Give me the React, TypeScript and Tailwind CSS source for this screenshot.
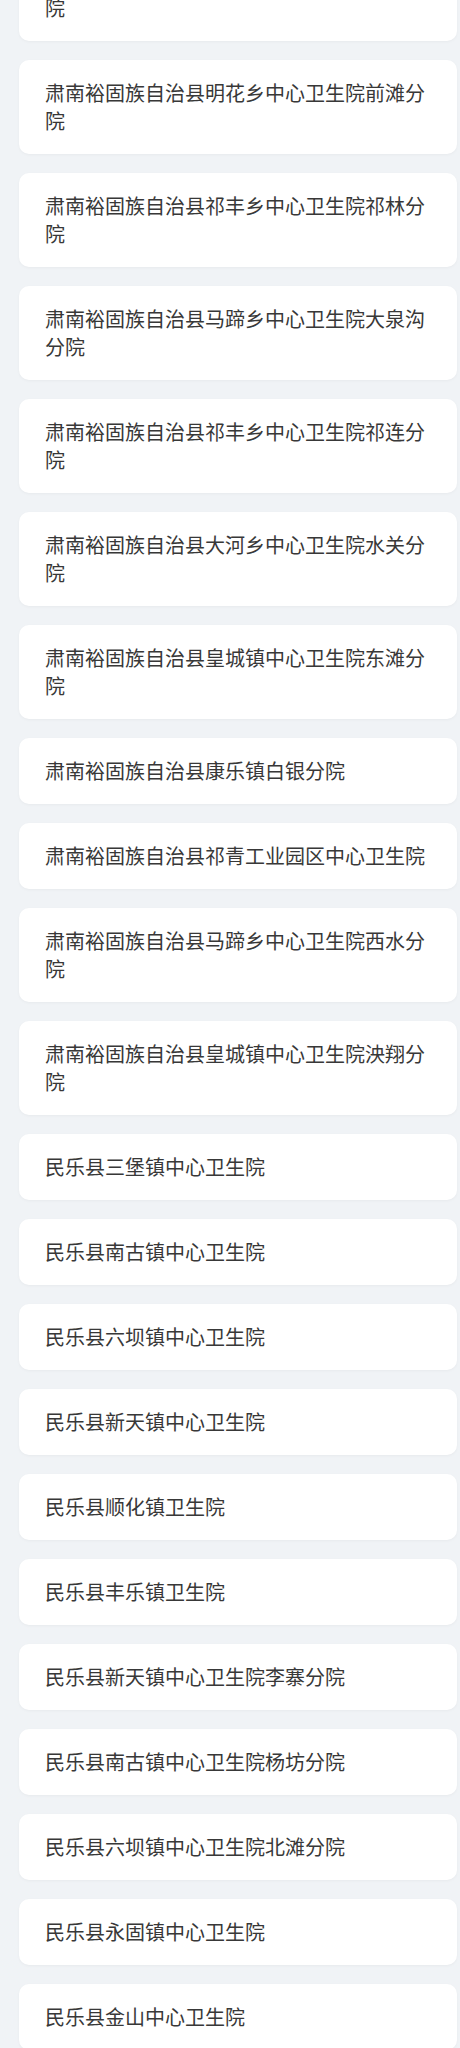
const HOSPITALS: string[] = [
  "肃南裕固族自治县明花乡中心卫生院莲花分院",
  "肃南裕固族自治县明花乡中心卫生院前滩分院",
  "肃南裕固族自治县祁丰乡中心卫生院祁林分院",
  "肃南裕固族自治县马蹄乡中心卫生院大泉沟分院",
  "肃南裕固族自治县祁丰乡中心卫生院祁连分院",
  "肃南裕固族自治县大河乡中心卫生院水关分院",
  "肃南裕固族自治县皇城镇中心卫生院东滩分院",
  "肃南裕固族自治县康乐镇白银分院",
  "肃南裕固族自治县祁青工业园区中心卫生院",
  "肃南裕固族自治县马蹄乡中心卫生院西水分院",
  "肃南裕固族自治县皇城镇中心卫生院泱翔分院",
  "民乐县三堡镇中心卫生院",
  "民乐县南古镇中心卫生院",
  "民乐县六坝镇中心卫生院",
  "民乐县新天镇中心卫生院",
  "民乐县顺化镇卫生院",
  "民乐县丰乐镇卫生院",
  "民乐县新天镇中心卫生院李寨分院",
  "民乐县南古镇中心卫生院杨坊分院",
  "民乐县六坝镇中心卫生院北滩分院",
  "民乐县永固镇中心卫生院",
  "民乐县金山中心卫生院",
];

export default function App() {
  return (
    <div
      className="min-h-screen bg-[#f0f3f6] overflow-hidden"
      style={{ fontFamily: '"Noto Sans CJK SC", "Noto Sans", sans-serif' }}
    >
      {/* Hospital list (scrolled, first card cut off at top) */}
      <div className="flex flex-col gap-[19px] pl-[19px] pr-[3px] -mt-[53px] pb-6">
        {HOSPITALS.map((name) => (
          <div
            key={name}
            className="bg-white rounded-[10px] pl-[26px] pr-[26px] py-[19px] shadow-[0_1px_3px_rgba(0,0,0,0.04)]"
          >
            <p className="text-[20px] leading-[28px] text-[#383838]">{name}</p>
          </div>
        ))}
      </div>
    </div>
  );
}
